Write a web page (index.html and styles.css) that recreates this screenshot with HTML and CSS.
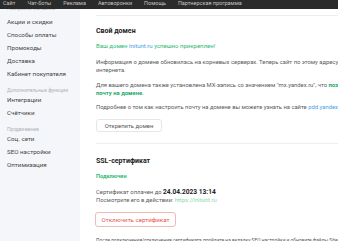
FILE: index.html
```html
<!DOCTYPE html>
<html lang="ru">
<head>
<meta charset="utf-8">
<title>Свой домен</title>
<link rel="stylesheet" href="styles.css">
</head>
<body>
<div class="page">
  <header class="topbar">
    <span class="top-item">Сайт</span>
    <span class="top-item">Чат-боты</span>
    <span class="top-item">Реклама</span>
    <span class="top-item">Автоворонки</span>
    <span class="top-item">Помощь</span>
    <span class="top-item">Партнерская программа</span>
  </header>
  <div class="body">
    <aside class="sidebar">
      <div class="side-inner">
        <div class="side-label first">Настройки магазина</div>
        <div class="side-item">Акции и скидки</div>
        <div class="side-item">Способы оплаты</div>
        <div class="side-item">Промокоды</div>
        <div class="side-item">Доставка</div>
        <div class="side-item">Кабинет покупателя</div>
        <div class="side-label">Дополнительные функции</div>
        <div class="side-item">Интеграции</div>
        <div class="side-item">Счётчики</div>
        <div class="side-label">Продвижение</div>
        <div class="side-item">Соц. сети</div>
        <div class="side-item">SEO настройки</div>
        <div class="side-item">Оптимизация</div>
      </div>
    </aside>
    <main class="main">
      <div class="prev"></div>
      <section class="section">
        <h2 class="title">Свой домен</h2>
        <p class="success">Ваш домен <span class="blue">lnitunt.ru</span> успешно прикреплен!</p>
        <p class="text t-info">Информация о домене обновилась на корневых серверах. Теперь сайт по этому адресу доступен из<br>интернета.</p>
        <p class="text t-mx">Для вашего домена также установлена MX-запись со значением "mx.yandex.ru", что <b class="green">позволяет использовать<br>почту на домене</b>.</p>
        <p class="text t-more">Подробнее о том как настроить почту на домене вы можете узнать на сайте <span class="blue">pdd.yandex.ru</span></p>
        <button class="btn">Открепить домен</button>
      </section>
      <section class="section ssl">
        <h2 class="title">SSL-сертификат</h2>
        <p class="status">Подключен</p>
        <p class="text t-cert">Сертификат оплачен до <b class="date">24.04.2023 13:14</b><br>Посмотрите его в действии: <span class="pale">https://lnitunt.ru</span></p>
        <button class="btn btn-red">Отключить сертификат</button>
        <p class="note">После подключения/отключения сертификата пройдите на вкладку SEO настройки и обновите файлы Sitemap и robots.txt</p>
      </section>
    </main>
  </div>
</div>
</body>
</html>
```

FILE: styles.css
```css
* { box-sizing: border-box; }
html, body {
  margin: 0;
  padding: 0;
  width: 338px;
  height: 241px;
  overflow: hidden;
  background: #fff;
  font-family: "Roboto", "Liberation Sans", sans-serif;
}
.page {
  display: flex;
  flex-direction: column;
  height: 241px;
}
.topbar {
  flex: 0 0 9px;
  height: 9px;
  background: #2b2b2b;
  display: flex;
  gap: 12px;
  padding-left: 3px;
  font-size: 5.5px;
  line-height: 7px;
  color: #c4c4c4;
  white-space: nowrap;
  overflow: hidden;
}
.body {
  flex: 1;
  display: flex;
  min-height: 0;
  overflow: hidden;
}
.sidebar {
  flex: 0 0 80px;
  background: #f4f6f9;
  overflow: hidden;
}
.side-inner {
  margin-top: -4px;
  padding-left: 7px;
}
.side-label {
  font-size: 4.9px;
  line-height: 7px;
  color: #aeb2b8;
  margin-top: 6px;
  white-space: nowrap;
}
.side-label.first { margin-top: 0; margin-bottom: 4px; }
.side-item {
  font-size: 6.2px;
  line-height: 13px;
  color: #444;
  white-space: nowrap;
}
.main {
  flex: 1;
  min-width: 0;
  overflow: hidden;
  padding-left: 16px;
  white-space: nowrap;
  color: #555;
}
.prev { height: 6px; }
.section {
  border-top: 1px solid #eceef1;
  padding-top: 10px;
  padding-bottom: 11px;
  width: 420px;
}
.ssl { padding-top: 12px; }
.title {
  margin: 0;
  font-size: 7px;
  line-height: 10px;
  font-weight: 700;
  color: #222;
}
p { margin: 0; }
.success {
  margin-top: 6px;
  font-size: 6px;
  line-height: 8px;
  color: #2eb872;
}
.blue { color: #4a9ee6; }
.green { color: #22a968; font-weight: 700; }
.pale { color: #8fd6ad; }
.text {
  font-size: 5.85px;
  line-height: 8px;
  color: #5a5a5a;
}
.t-info { margin-top: 8px; }
.t-mx { margin-top: 7px; }
.t-more { margin-top: 6px; }
.t-cert { margin-top: 8px; }
.date { font-size: 6.6px; color: #222; }
.status {
  margin-top: 6px;
  font-size: 5.6px;
  line-height: 8px;
  font-weight: 700;
  color: #2eb872;
}
.btn {
  display: block;
  margin-top: 8px;
  height: 13px;
  width: 66px;
  padding: 0;
  font-family: inherit;
  font-size: 5.9px;
  color: #555;
  background: #fff;
  border: 1px solid #e4e6ea;
  border-radius: 3px;
}
.btn-red {
  height: 15px;
  width: 81px;
  margin-left: -1px;
  color: #e8554e;
  border-color: #f3b9b6;
  font-size: 6.2px;
}
.note {
  margin-top: 10px;
  font-size: 4.8px;
  line-height: 7px;
  color: #555;
}
```
